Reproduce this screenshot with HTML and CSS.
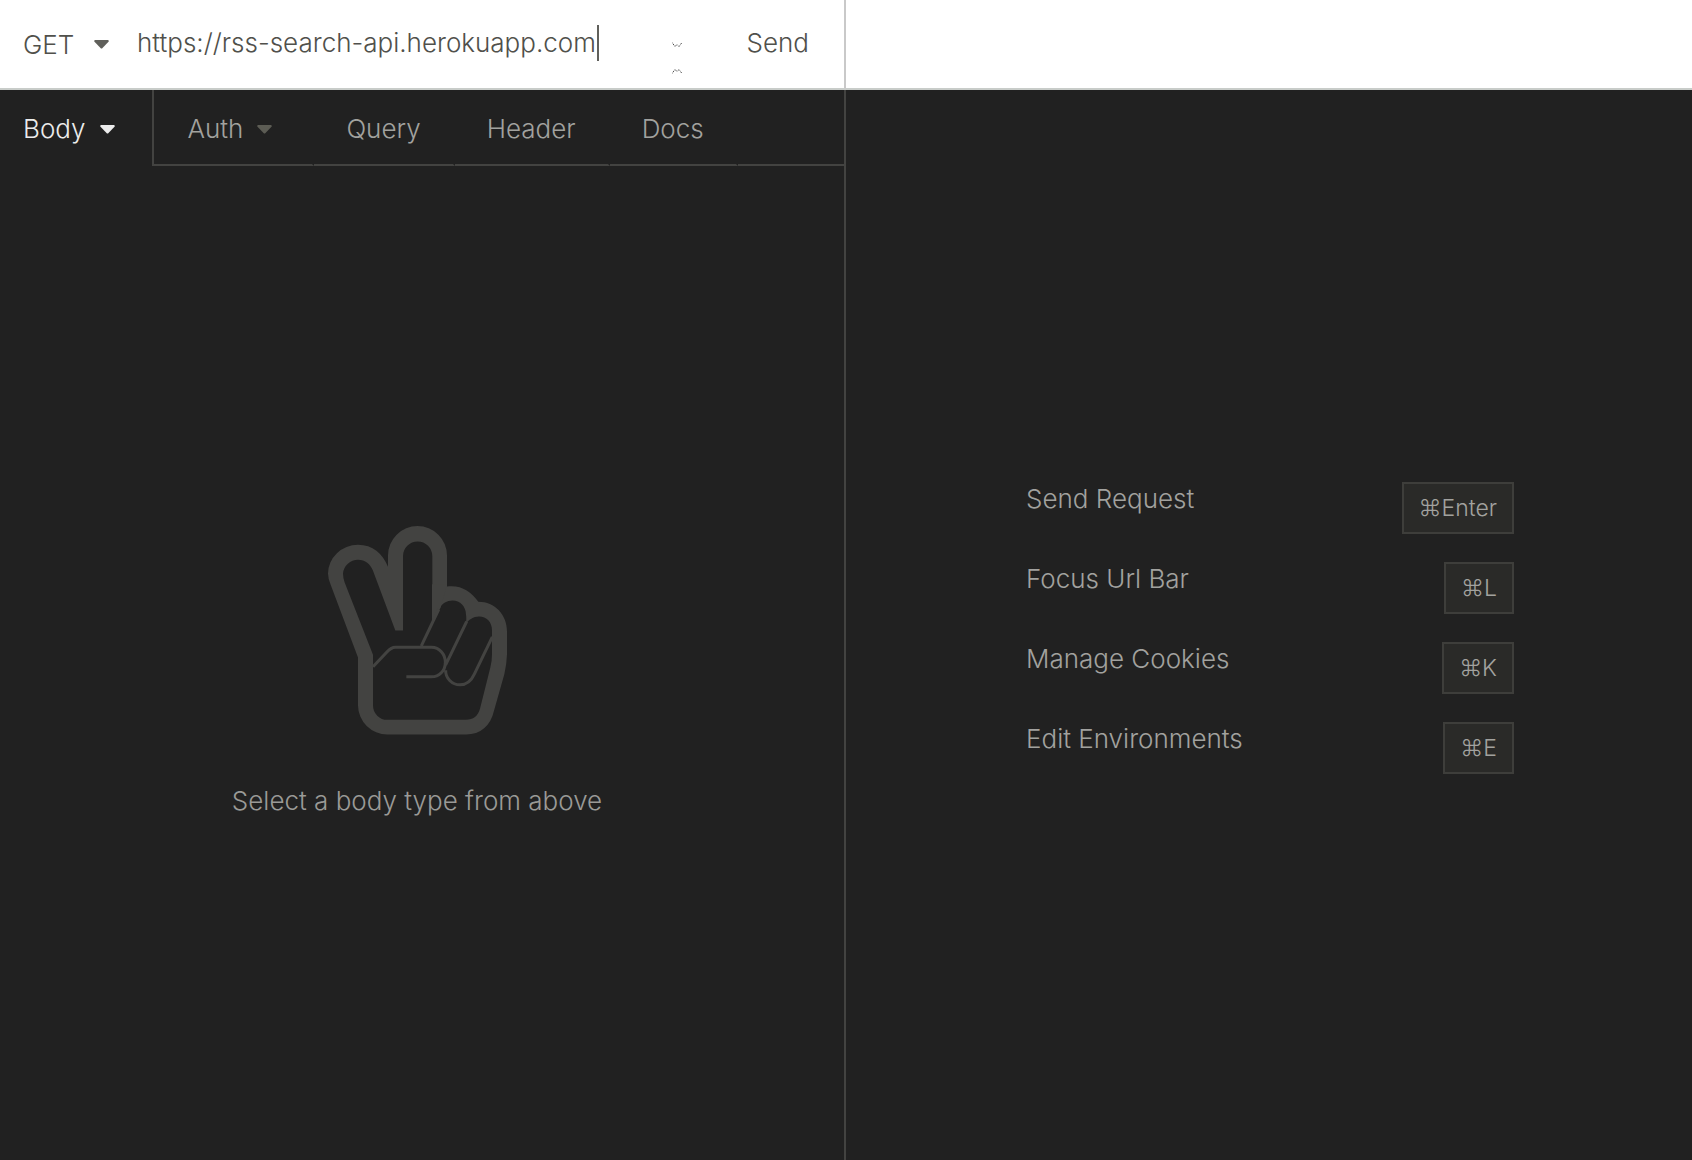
FILE: index.html
```html
<!DOCTYPE html>
<html lang="en">
<head>
<meta charset="utf-8">
<title>API Client</title>
<link rel="stylesheet" href="styles.css">
</head>
<body>
<main class="app">
  <section class="pane request" aria-label="Request">
    <form class="bar">
      <span class="method">
        <select class="method-select" aria-label="Method"><option>GET</option></select>
        <svg class="caret" viewBox="0 0 15 9" aria-hidden="true"><path d="M1 0H14Q15.400 .6 14.500 1.700L8.500 8Q7.500 9 6.500 8L.5 1.700Q-.4.6 1 0Z"/></svg>
      </span>
      <span class="url">
        <input class="url-input" type="text" aria-label="URL" value="https://rss-search-api.herokuapp.com" spellcheck="false">
        <span class="cursor"></span>
      </span>
      <svg class="arrows" viewBox="0 0 10 32" aria-hidden="true"><path d="M0 .5L3 4.500L5 2.500L7 4.500L10 .5M0 31.500L3 27.500L5 29.500L7 27.500L10 31.500"/></svg>
      <button class="send" type="button">Send</button>
    </form>
    <div class="tabs" role="tablist">
      <button class="tab active" role="tab" aria-selected="true">Body<svg class="caret" viewBox="0 0 15 9" aria-hidden="true"><path d="M1 0H14Q15.400 .6 14.500 1.700L8.500 8Q7.500 9 6.500 8L.5 1.700Q-.4.6 1 0Z"/></svg></button>
      <button class="tab menu" role="tab">Auth<svg class="caret dim" viewBox="0 0 15 9" aria-hidden="true"><path d="M1 0H14Q15.400 .6 14.500 1.700L8.500 8Q7.500 9 6.500 8L.5 1.700Q-.4.6 1 0Z"/></svg></button>
      <button class="tab" role="tab">Query</button>
      <button class="tab" role="tab">Header</button>
      <button class="tab" role="tab">Docs</button>
      <span class="tab-rest"></span>
    </div>
    <div class="empty">
      <svg class="hand" viewBox="54 46 537 626" aria-hidden="true">
        <path class="hand-fill" fill-rule="evenodd" d="M144 440L62 222Q54 202 54 188A90 87 0 0 1 144 102C188 102 218 128 234 168V134A88 88 0 0 1 411 134V227C450 221 483 240 505 273C555 273 591 312 591 362V430Q590 460 583 490L552 600C541 646 512 671 468 671H232A88 88 0 0 1 144 584ZM189 432V584A43 43 0 0 0 232 627H468C490 627 504 616 510 594L541 470Q546 450 546 430V358C546 334 530 317 507 317C490 317 476 326 466 342C470 330 469 320 468 311C468 287 450 269 428 269C410 269 397 278 390 290L367 326V136A44 44 0 0 0 279 136V359H256L189 180C181 160 166 147 144 147A45 45 0 0 0 99 188Q99 200 104 215Z"/>
        <path class="hand-fill" d="M366 220H411L392 290L372 328H366Z"/>
        <path class="hand-line" d="M386 296L334 405M470 332L407 462M547 378L493 490C483 512 468 522 450 522C426 522 406 502 407 478M189 468L230 424Q244 409 256 409H364C390 409 406 432 406 454C406 480 388 498 364 498H289"/>
      </svg>
      <p class="hint">Select a body type from above</p>
    </div>
  </section>
  <section class="pane" aria-label="Response">
    <div class="bar"></div>
    <div class="response">
      <dl class="shortcuts">
        <div class="row"><dt>Send Request</dt><dd><kbd>⌘Enter</kbd></dd></div>
        <div class="row"><dt>Focus Url Bar</dt><dd><kbd>⌘L</kbd></dd></div>
        <div class="row"><dt>Manage Cookies</dt><dd><kbd>⌘K</kbd></dd></div>
        <div class="row"><dt>Edit Environments</dt><dd><kbd>⌘E</kbd></dd></div>
      </dl>
    </div>
  </section>
</main>
</body>
</html>
```
FILE: styles.css
```css
* { box-sizing: border-box; }
body {
  margin: 0;
  background: #212121;
  color: #a2a29f;
  font: 300 26px/36px Inter, "Liberation Sans", sans-serif;
}
button, input, select { font: inherit; color: inherit; border: 0; padding: 0; margin: 0; background: none; }
.app { display: grid; grid-template-columns: 1fr 1fr; min-height: 100vh; }
.pane { display: flex; flex-direction: column; min-width: 0; }
.request { border-right: 2px solid #434341; }
.bar {
  display: flex;
  align-items: flex-start;
  height: 90px;
  padding: 25px 35px 0 23px;
  background: #fff;
  border-bottom: 2px solid #c8ccc9;
  color: #50504b;
}
.request .bar { margin-right: -2px; border-right: 2px solid #c9c9c9; }
.method { display: flex; align-items: center; gap: 20px; margin-right: 28px; padding-top: 2px; }
.method-select { appearance: none; width: 51px; height: 36px; outline: 0; }
.caret { width: 15px; height: 9px; fill: currentColor; flex: none; }
.method .caret { margin-bottom: 2px; fill: #60605b; }
.caret.dim { fill: #5c5c54; }
.url { display: flex; flex: 1; min-width: 0; }
.url-input { field-sizing: content; height: 36px; outline: 0; }
.cursor { width: 2px; height: 36px; margin-left: 1px; background: #60605b; }
.arrows { width: 10px; height: 32px; margin: 17px 65px 0 0; fill: none; stroke: #222; stroke-width: 1; stroke-dasharray: 1 1; }
.tabs { display: flex; height: 76px; }
.tab {
  display: flex;
  align-items: center;
  gap: 14px;
  padding: 4px 32px 0;
  border-bottom: 2px solid #434341;
  border-right: 2px solid #212121;
}
.tab.menu { padding-right: 40px; padding-left: 34px; }
.tab.active { color: #ececec; padding: 4px 37px 2px 23px; border-right: 2px solid #434341; border-bottom: 0; }
.tab-rest { flex: 1; border-bottom: 2px solid #434341; }
.empty { flex: 1; display: flex; flex-direction: column; align-items: center; justify-content: center; padding: 18px 10px 0 0; }
.hand { width: 179px; height: 209px; }
.hand-fill { fill: #434341; }
.hand-line { fill: none; stroke: #434341; stroke-width: 9; }
.hint { margin: 48px 0 0; color: #9a9a97; }
.response { flex: 1; display: flex; align-items: center; justify-content: center; padding: 6px 0 0 2px; }
.shortcuts { display: grid; gap: 28px; width: 488px; max-width: 90%; margin: 0; }
.row { display: flex; justify-content: space-between; }
dt { line-height: 34px; }
dd { margin: 0; }
kbd { display: block; padding: 6px 15px; border: 2px solid #3e3e3b; background: #2a2a28; font: 300 23px/36px Inter, "Liberation Sans", sans-serif; }
```
